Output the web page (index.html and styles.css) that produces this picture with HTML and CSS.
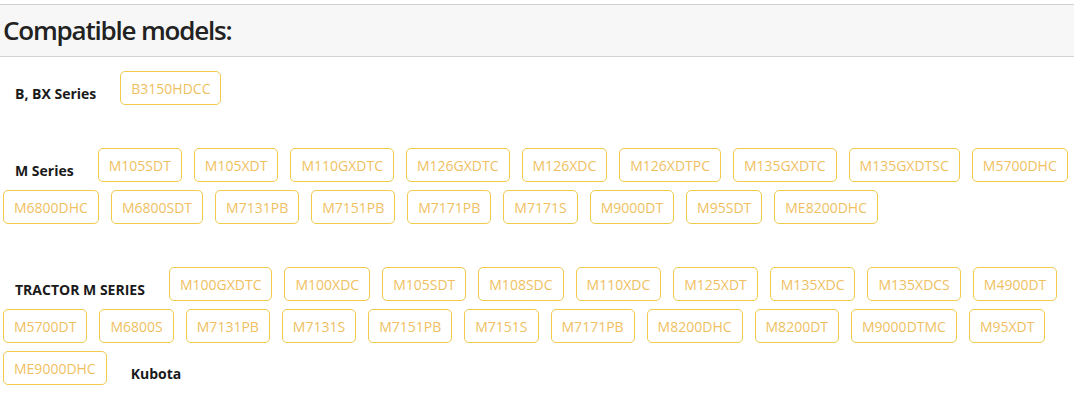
FILE: index.html
```html
<!DOCTYPE html>
<html lang="en">
<head>
  <meta charset="UTF-8">
  <meta name="viewport" content="width=device-width, initial-scale=1.0">
  <title>Compatible models</title>
  <link rel="stylesheet" href="styles.css">
</head>
<body>
  <div class="models-head">
    <h2>Compatible models:</h2>
  </div>

  <div class="models">
    <div class="series">
      <span class="series-name">B, BX Series</span>
      <a class="model" href="#">B3150HDCC</a>
    </div>

    <div class="series">
      <span class="series-name">M Series</span>
      <a class="model" href="#">M105SDT</a>
      <a class="model" href="#">M105XDT</a>
      <a class="model" href="#">M110GXDTC</a>
      <a class="model" href="#">M126GXDTC</a>
      <a class="model" href="#">M126XDC</a>
      <a class="model" href="#">M126XDTPC</a>
      <a class="model" href="#">M135GXDTC</a>
      <a class="model" href="#">M135GXDTSC</a>
      <a class="model" href="#">M5700DHC</a>
      <a class="model" href="#">M6800DHC</a>
      <a class="model" href="#">M6800SDT</a>
      <a class="model" href="#">M7131PB</a>
      <a class="model" href="#">M7151PB</a>
      <a class="model" href="#">M7171PB</a>
      <a class="model" href="#">M7171S</a>
      <a class="model" href="#">M9000DT</a>
      <a class="model" href="#">M95SDT</a>
      <a class="model" href="#">ME8200DHC</a>
    </div>

    <div class="series">
      <span class="series-name">TRACTOR M SERIES</span>
      <a class="model" href="#">M100GXDTC</a>
      <a class="model" href="#">M100XDC</a>
      <a class="model" href="#">M105SDT</a>
      <a class="model" href="#">M108SDC</a>
      <a class="model" href="#">M110XDC</a>
      <a class="model" href="#">M125XDT</a>
      <a class="model" href="#">M135XDC</a>
      <a class="model" href="#">M135XDCS</a>
      <a class="model" href="#">M4900DT</a>
      <a class="model" href="#">M5700DT</a>
      <a class="model" href="#">M6800S</a>
      <a class="model" href="#">M7131PB</a>
      <a class="model" href="#">M7131S</a>
      <a class="model" href="#">M7151PB</a>
      <a class="model" href="#">M7151S</a>
      <a class="model" href="#">M7171PB</a>
      <a class="model" href="#">M8200DHC</a>
      <a class="model" href="#">M8200DT</a>
      <a class="model" href="#">M9000DTMC</a>
      <a class="model" href="#">M95XDT</a>
      <a class="model" href="#">ME9000DHC</a>
      <span class="series-name">Kubota</span>
    </div>
  </div>
</body>
</html>
```

FILE: styles.css
```css
body {
  margin: 0;
  padding-top: 4px;
  background: #fff;
  font-family: "Open Sans", Arial, sans-serif;
  color: #1c1c1c;
}
.models-head {
  background: #f7f7f7;
  border-top: 1px solid #d2d2d2;
  border-bottom: 1px solid #d2d2d2;
  padding: 0 3px;
}
.models-head h2 {
  margin: 0;
  height: 51px;
  line-height: 50px;
  font-size: 26px;
  font-weight: 600;
  letter-spacing: -1.2px;
  color: #222;
}
.models {
  padding: 14px 0 0 3px;
}
.series {
  display: flex;
  flex-wrap: wrap;
  align-items: center;
  gap: 8px 12px;
  margin-bottom: 43px;
}
.series:last-child {
  margin-bottom: 0;
}
.series-name {
  padding: 10px 12px 0;
  font-size: 14px;
  font-weight: bold;
  color: #1a1a1a;
}
.model {
  display: flex;
  align-items: center;
  box-sizing: border-box;
  height: 34px;
  padding: 0 10px;
  border: 1px solid #f1c94c;
  border-radius: 5px;
  font-size: 14px;
  color: #efbf62;
  text-decoration: none;
}
```
